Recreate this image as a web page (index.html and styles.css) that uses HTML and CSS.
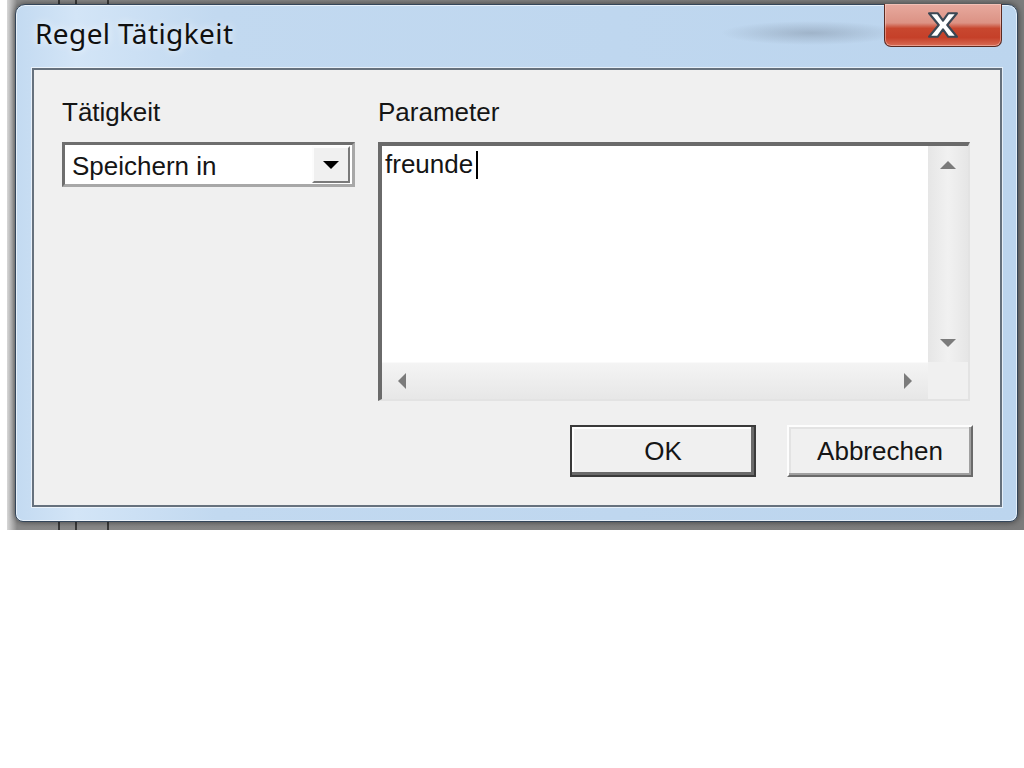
FILE: index.html
```html
<!DOCTYPE html>
<html lang="de">
<head>
    <meta charset="UTF-8">
    <meta name="viewport" content="width=device-width, initial-scale=1.0">
    <title>Regel Tätigkeit</title>
    <link rel="stylesheet" href="styles.css">
</head>
<body>

    <div class="desktop">
        <div class="window">
            <div class="titlebar">
                <span class="title">Regel Tätigkeit</span>
                <button type="button" class="close" aria-label="Schließen">
                    <svg width="30" height="26" viewBox="-1 -1 28 24">
                        <polygon points="0,0 8,0 13,7 18,0 26,0 17,11 26,22 18,22 13,15 8,22 0,22 9,11" fill="#fff" stroke="#3b4754" stroke-width="2" stroke-linejoin="round"/>
                    </svg>
                </button>
            </div>

            <div class="client">
                <div class="fields">
                    <div class="field field-action">
                        <label class="field-label">Tätigkeit</label>
                        <div class="combo">
                            <span class="combo-value">Speichern in</span>
                            <span class="combo-btn">
                                <svg width="16" height="8" viewBox="0 0 16 8"><polygon points="0,0 16,0 8,8" fill="#000"/></svg>
                            </span>
                        </div>
                    </div>

                    <div class="field field-param">
                        <label class="field-label">Parameter</label>
                        <div class="memo">
                            <div class="memo-text">freunde<span class="caret"></span></div>
                            <div class="vscroll">
                                <span class="arrow"><svg width="16" height="8" viewBox="0 0 16 8"><polygon points="0,8 8,0 16,8" fill="#7b7b7b"/></svg></span>
                                <span class="arrow"><svg width="16" height="8" viewBox="0 0 16 8"><polygon points="0,0 16,0 8,8" fill="#7b7b7b"/></svg></span>
                            </div>
                            <div class="hscroll">
                                <span class="arrow"><svg width="8" height="16" viewBox="0 0 8 16"><polygon points="8,0 8,16 0,8" fill="#7b7b7b"/></svg></span>
                                <span class="arrow"><svg width="8" height="16" viewBox="0 0 8 16"><polygon points="0,0 8,8 0,16" fill="#7b7b7b"/></svg></span>
                            </div>
                            <div class="corner"></div>
                        </div>
                    </div>
                </div>

                <div class="actions">
                    <button type="button" class="btn btn-default">OK</button>
                    <button type="button" class="btn">Abbrechen</button>
                </div>
            </div>
        </div>
    </div>

</body>
</html>
```

FILE: styles.css
```css
body {
    margin: 0;
    background: #fff;
    font-family: 'Liberation Sans', Arial, sans-serif;
    color: #151515;
}
.desktop {
    height: 530px;
    margin-left: 7px;
    padding: 4px 0 0 8px;
    box-sizing: border-box;
    background:
        linear-gradient(to right, transparent 51px, #3a3a3a 51px, #3a3a3a 53px, transparent 53px,
            transparent 68px, #3a3a3a 68px, #3a3a3a 70px, transparent 70px,
            transparent 100px, #3a3a3a 100px, #3a3a3a 102px, transparent 102px),
        linear-gradient(to right, #d8d8d8, #8a8a8a 10px, #7c7c7c);
}
.window {
    width: 1003px;
    height: 518px;
    box-sizing: border-box;
    border: 1px solid #34465a;
    border-radius: 10px 10px 8px 8px;
    padding: 0 15px 14px 16px;
    background:
        radial-gradient(ellipse 90px 12px at 795px 28px, rgba(90, 100, 115, 0.3), transparent),
        linear-gradient(to right, #c3daf1, #d3e5f7 60px, #c2d9f0 200px, #bcd5ee 100%);
    box-shadow: 0 0 6px rgba(0, 0, 0, 0.55), inset 0 0 0 1px rgba(255, 255, 255, 0.6);
}
.titlebar {
    height: 63px;
    display: flex;
    justify-content: space-between;
    align-items: flex-start;
}
.title {
    font-family: 'Noto Sans', 'Liberation Sans', sans-serif;
    font-size: 28px;
    line-height: 36px;
    letter-spacing: 0.4px;
    padding: 10px 0 0 3px;
    color: #101010;
    text-shadow: 0 0 8px rgba(255, 255, 255, 0.9);
}
.close {
    width: 118px;
    height: 43px;
    margin-top: -1px;
    padding: 0;
    border: 1px solid #5a2a22;
    border-top: none;
    border-radius: 0 0 7px 7px;
    background: linear-gradient(to bottom, #e7aa9f 0, #dc9284 45%, #c8472f 58%, #c54029 80%, #d86c55 100%);
    box-shadow: inset 0 0 0 1px rgba(255, 220, 210, 0.45);
    display: flex;
    align-items: center;
    justify-content: center;
}
.client {
    border: 2px solid #66717d;
    background: #f0f0f0;
    padding: 27px 27px 28px 28px;
    box-shadow: 0 0 0 1px rgba(255, 255, 255, 0.6);
}
.fields {
    display: flex;
    gap: 23px;
}
.field-action {
    width: 293px;
}
.field-param {
    width: 592px;
}
.field-label {
    display: block;
    font-size: 26px;
    line-height: 30px;
    margin-bottom: 15px;
}
.combo {
    height: 45px;
    box-sizing: border-box;
    display: flex;
    background: #fff;
    border: 3px solid;
    border-color: #6e6e6e #a8a8a8 #a8a8a8 #6e6e6e;
}
.combo-value {
    flex: 1;
    font-size: 26px;
    line-height: 30px;
    padding: 6px 0 0 7px;
}
.combo-btn {
    width: 38px;
    margin: 1px 2px 1px 0;
    box-sizing: border-box;
    background: #f0f0f0;
    border: 2px solid;
    border-color: #fcfcfc #7a7a7a #7a7a7a #fcfcfc;
    display: flex;
    align-items: center;
    justify-content: center;
}
.memo {
    height: 259px;
    box-sizing: border-box;
    border-style: solid;
    border-width: 4px 2px 2px 4px;
    border-color: #6a6a6a #e3e3e3 #e3e3e3 #6a6a6a;
    display: grid;
    grid-template-columns: 1fr 40px;
    grid-template-rows: 1fr 37px;
}
.memo-text {
    background: #fff;
    font-size: 26px;
    line-height: 30px;
    padding: 3px 0 0 3px;
}
.caret {
    display: inline-block;
    width: 2px;
    height: 28px;
    margin-left: 3px;
    background: #000;
    vertical-align: -6px;
}
.vscroll {
    background: linear-gradient(to right, #e6e6e6, #f1f1f1 50%, #e6e6e6);
    display: flex;
    flex-direction: column;
    justify-content: space-between;
}
.vscroll .arrow {
    height: 38px;
    display: flex;
    align-items: center;
    justify-content: center;
}
.hscroll {
    background: linear-gradient(to bottom, #f4f4f4, #e7e7e7);
    border-top: 1px solid #fafafa;
    display: flex;
    justify-content: space-between;
}
.hscroll .arrow {
    width: 40px;
    display: flex;
    align-items: center;
    justify-content: center;
}
.corner {
    background: #f0f0f0;
}
.actions {
    display: flex;
    justify-content: flex-end;
    gap: 31px;
    margin-top: 24px;
}
.btn {
    width: 186px;
    height: 52px;
    box-sizing: border-box;
    padding: 0;
    font-family: 'Liberation Sans', Arial, sans-serif;
    font-size: 26px;
    color: #151515;
    background: #f0f0f0;
    border: 2px solid;
    border-color: #fdfdfd #6a6a6a #6a6a6a #fdfdfd;
    box-shadow: inset -2px -2px 0 #a0a0a0, inset 2px 2px 0 #e3e3e3;
}
.btn-default {
    border-color: #3a3a3a;
    box-shadow: inset -3px -3px 0 #6a6a6a, inset 2px 2px 0 #fff;
}
```
